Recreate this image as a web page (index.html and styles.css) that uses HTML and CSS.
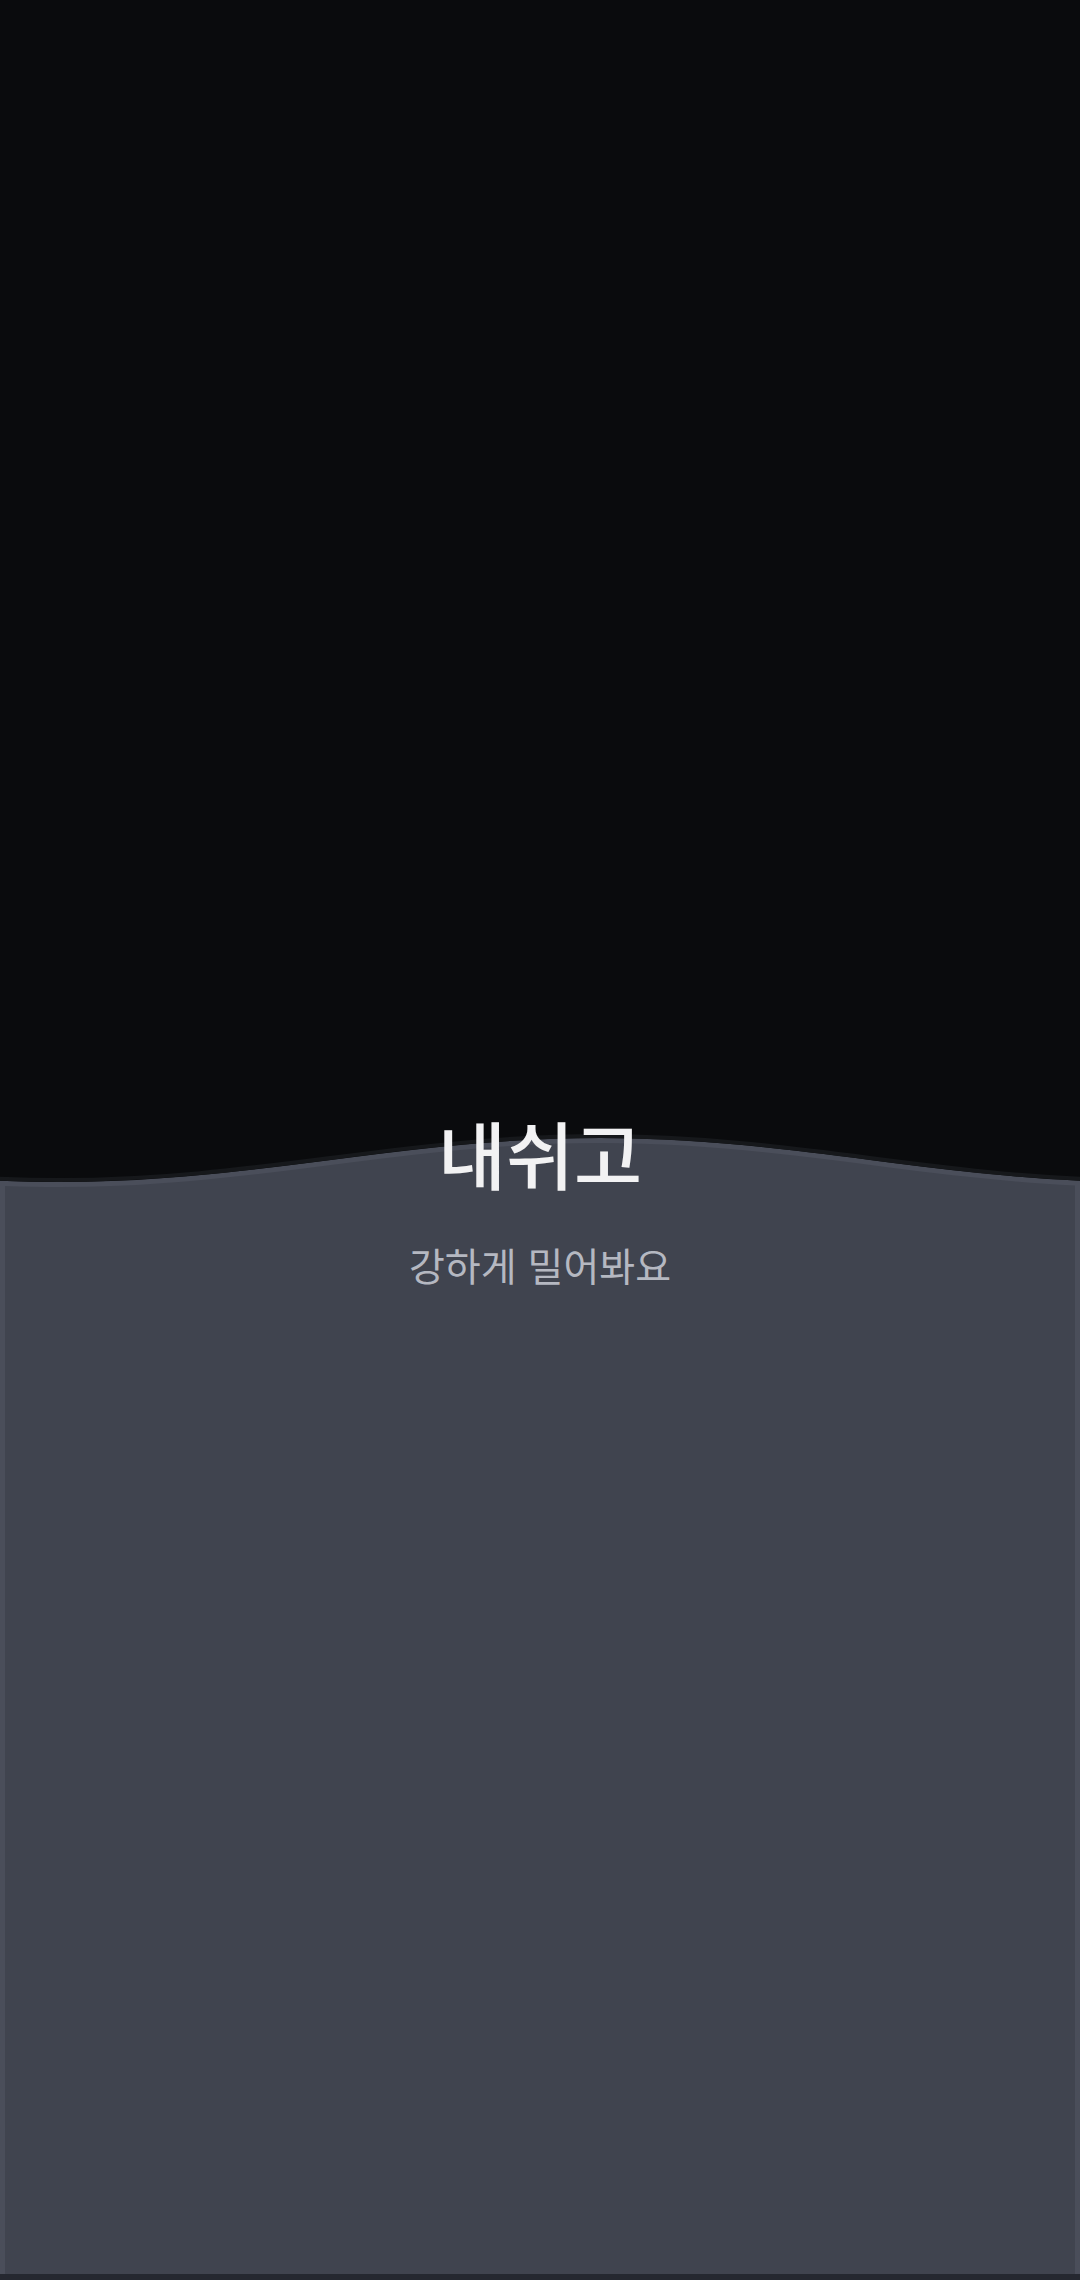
FILE: index.html
```html
<!DOCTYPE html>
<html lang="ko">
<head>
    <meta charset="UTF-8">
    <meta name="viewport" content="width=device-width, initial-scale=1.0">
    <title>내쉬고</title>
    <link rel="stylesheet" href="styles.css">
</head>
<body>
    <div class="screen">
        <div class="sky"></div>

        <div class="panel">
            <!-- wave top of the sheet, drawn behind the text -->
            <svg class="sheet" viewBox="0 0 1080 1174" preserveAspectRatio="none" aria-hidden="true">
                <defs>
                    <clipPath id="inner">
                        <rect x="5" y="0" width="1070" height="1174"></rect>
                    </clipPath>
                </defs>
                <path fill="#4a4e5a" d="M-480 38 C-283 38 -137 82 60 82 C257 82 403 38 600 38 C797 38 943 82 1140 82 L1140 1174 L-480 1174 Z"></path>
                <path fill="#40444f" clip-path="url(#inner)" transform="translate(0 5)" d="M-480 38 C-283 38 -137 82 60 82 C257 82 403 38 600 38 C797 38 943 82 1140 82 L1140 1174 L-480 1174 Z"></path>
                <path fill="none" stroke="#16181b" stroke-width="4" transform="translate(0 -2)" d="M-480 38 C-283 38 -137 82 60 82 C257 82 403 38 600 38 C797 38 943 82 1140 82"></path>
            </svg>

            <div class="copy">
                <h1 class="title">내쉬고</h1>
                <p class="hint">강하게 밀어봐요</p>
            </div>
        </div>

        <div class="base"></div>
    </div>
</body>
</html>
```

FILE: styles.css
```css
html, body {
    margin: 0;
    padding: 0;
}
body {
    background-color: #0a0b0d;
    font-family: "Noto Sans CJK KR", "Noto Sans", sans-serif;
}
.screen {
    display: flex;
    flex-direction: column;
    height: 2280px;
    overflow: hidden;
}
.sky {
    flex: 1;
}
.panel {
    position: relative;
    height: 1174px;
}
.sheet {
    position: absolute;
    top: 0;
    left: 0;
    width: 100%;
    height: 100%;
    display: block;
}
.copy {
    position: relative;
    display: flex;
    flex-direction: column;
    align-items: center;
    padding-top: 12px;
}
.title {
    margin: 0;
    font-size: 74px;
    line-height: 80px;
    font-weight: 500;
    color: #f2f2f3;
}
.hint {
    margin: 47px 0 0;
    font-size: 39px;
    line-height: 50px;
    font-weight: 400;
    color: #b5b8c1;
}
.base {
    height: 6px;
    background-color: #252830;
}
```
